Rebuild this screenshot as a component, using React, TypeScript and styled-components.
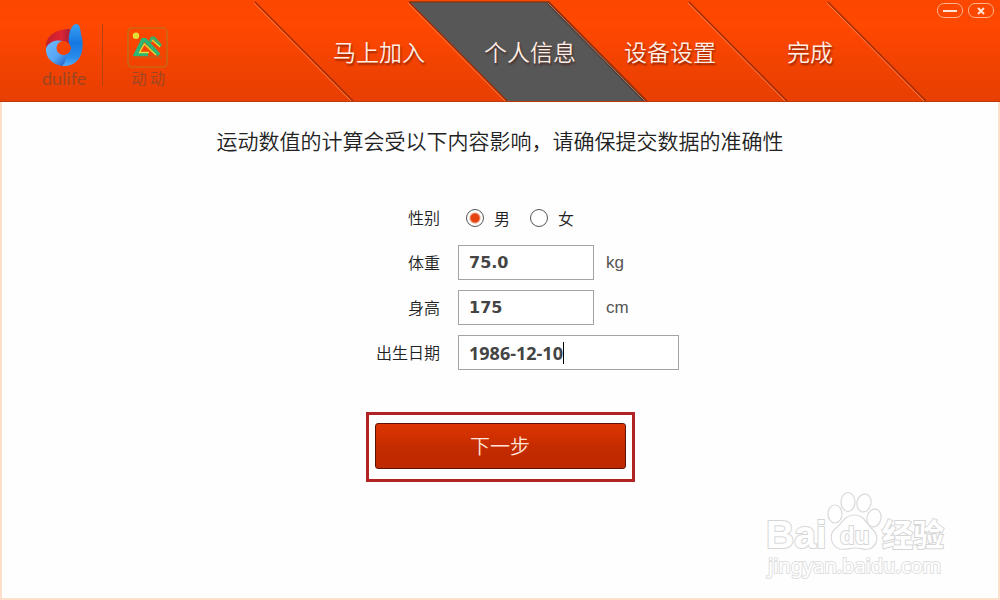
import React from "react";
import styled, { createGlobalStyle, css } from "styled-components";

const GlobalStyle = createGlobalStyle`
  *, *::before, *::after { box-sizing: border-box; }
  body {
    margin: 0;
    background: #fff;
    color: #222;
    font-family: "Noto Sans CJK SC", sans-serif;
    font-weight: 350;
  }
`;

const Window = styled.div`
  position: relative;
  display: flex;
  flex-direction: column;
  min-height: 100vh;
  background: #fefefe;
`;

const Header = styled.header`
  display: flex;
  height: 102px;
  overflow: hidden;
  background: linear-gradient(#fb4700, #ff4800 24%, #ee4102 75%, #e83f02);
  border-bottom: 1px solid #b93a0c;
`;

const Brands = styled.div`
  display: flex;
  flex: 0 0 306px;
  align-items: flex-start;
  padding: 24px 0 0 42px;
`;

const Brand = styled.div<{ $divided?: boolean }>`
  display: flex;
  flex-direction: column;
  align-items: center;
  height: 62px;
  ${(p) =>
    p.$divided &&
    css`
      padding-right: 16px;
      margin-right: 24px;
      border-right: 1px solid #b9400f;
    `}

  svg {
    flex-shrink: 0;
  }
`;

const BrandName = styled.span<{ $latin?: boolean }>`
  color: #9c4721;
  font-family: ${(p) => (p.$latin ? '"Lato", sans-serif' : '"Noto Sans CJK SC", sans-serif')};
  font-size: ${(p) => (p.$latin ? 18 : 15)}px;
  font-weight: 400;
  line-height: 20px;
  white-space: pre;
`;

const Steps = styled.ol`
  display: flex;
  flex: 0 1 auto;
  margin: 0;
  padding: 0;
  list-style: none;
`;

const StepItem = styled.li<{ $first?: boolean }>`
  position: relative;
  width: ${(p) => (p.$first ? 154 : 140)}px;
  padding-right: ${(p) => (p.$first ? 8 : 0)}px;
`;

const StepShape = styled.svg`
  position: absolute;
  top: 0;
  left: -53px;
  overflow: visible;
`;

const StepLabel = styled.a`
  position: relative;
  display: block;
  color: #ffeee4;
  font-size: 23px;
  line-height: 102px;
  text-align: center;
  text-decoration: none;
  text-shadow: 1px 2px 2px rgba(60, 10, 0, 0.55);
`;

const WindowControls = styled.div`
  display: flex;
  gap: 5px;
  margin-left: auto;
  padding: 3px 6px 0 0;
`;

const ControlButton = styled.button`
  display: flex;
  align-items: center;
  justify-content: center;
  width: 26px;
  height: 15px;
  padding: 0;
  background: transparent;
  border: 1px solid #ffb28c;
  border-radius: 7px;
`;

const Content = styled.main`
  display: flex;
  flex: 1;
  flex-direction: column;
  align-items: center;
  border: 2px solid #ffdfca;
  border-top: 0;
`;

const Title = styled.h1`
  margin: 23px 0 0;
  font-size: 21px;
  font-weight: 350;
  line-height: 30px;
`;

const Form = styled.form`
  display: flex;
  flex-direction: column;
  align-items: center;
  margin-top: 45px;
`;

const Fields = styled.div`
  display: flex;
  flex-direction: column;
  gap: 10px;
`;

const Row = styled.div`
  display: grid;
  grid-template-columns: 119px 221px;
  column-gap: 18px;
  align-items: center;
  height: 35px;
`;

const Label = styled.label`
  padding-bottom: 2px;
  font-size: 16px;
  line-height: 24px;
  text-align: right;
`;

const Control = styled.div`
  position: relative;
  display: flex;
  align-items: center;
`;

const RadioLabel = styled.label`
  display: flex;
  align-items: center;
  gap: 10px;
  margin-left: 8px;
  margin-right: 12px;
  font-size: 16px;
  line-height: 24px;
`;

const Radio = styled.input`
  appearance: none;
  width: 18px;
  height: 18px;
  margin: 0;
  border: 1px solid #555;
  border-radius: 50%;
  background: #fff;
  &:checked {
    background: radial-gradient(circle, #e5430f 4px, #fff 6px);
  }
`;

const TextInput = styled.input<{ $wide?: boolean }>`
  width: ${(p) => (p.$wide ? 221 : 136)}px;
  height: 35px;
  padding: 1px 10px;
  border: 1px solid #a3a3a3;
  background: #fff;
  color: #444;
  font-family: ${(p) => (p.$wide ? '"Open Sans"' : '"DejaVu Sans"')}, sans-serif;
  font-size: ${(p) => (p.$wide ? 18 : 16)}px;
  font-weight: 700;
  outline: none;
`;

const Unit = styled.span`
  margin-left: 12px;
  color: #555;
  font-family: "Liberation Sans", sans-serif;
  font-size: 17px;
  font-weight: 400;
  line-height: 24px;
`;

const Caret = styled.span`
  position: absolute;
  top: 7px;
  left: 105px;
  width: 1px;
  height: 22px;
  background: #000;
`;

const Highlight = styled.div`
  width: 269px;
  margin-top: 42px;
  padding: 8px 6px 10px;
  border: 3px solid #b22323;
`;

const SubmitButton = styled.button`
  display: block;
  width: 100%;
  height: 46px;
  padding: 0;
  border: 1px solid #5a1406;
  border-radius: 3px;
  background: linear-gradient(#dc3502, #c22a00 60%, #bf2900);
  color: #ffe3d6;
  font-family: inherit;
  font-size: 20px;
  font-weight: 350;
  line-height: 44px;
`;

const Watermark = styled.svg`
  position: absolute;
  right: 50px;
  bottom: 16px;
`;

const DulifeLogo = () => (
  <svg width="44" height="44" viewBox="0 0 44 44" aria-hidden="true">
    <defs>
      <linearGradient id="stem" x1="0" y1="0" x2="0" y2="1">
        <stop offset="0" stopColor="#3ba0f2" />
        <stop offset="0.45" stopColor="#1478e0" />
        <stop offset="0.8" stopColor="#2a8cec" />
        <stop offset="1" stopColor="#55aef8" />
      </linearGradient>
      <linearGradient id="bowl" x1="0" y1="0" x2="1" y2="1">
        <stop offset="0" stopColor="#6fb8fb" />
        <stop offset="0.55" stopColor="#56a5f5" />
        <stop offset="1" stopColor="#1450b8" />
      </linearGradient>
      <linearGradient id="cap" x1="0" y1="0" x2="1" y2="0">
        <stop offset="0" stopColor="#c2202c" />
        <stop offset="0.6" stopColor="#dd2433" />
        <stop offset="1" stopColor="#a51d3a" />
      </linearGradient>
      <mask id="hole">
        <rect width="44" height="44" fill="#fff" />
        <circle cx="21.500" cy="24" r="7" fill="#000" />
      </mask>
    </defs>
    <g mask="url(#hole)">
      <path d="M4 24C3 14 11 5 28 5L29 22L22 24Z" fill="url(#cap)" />
      <path d="M4 24C8 16 18 14 27 20L24 36L21 42C10 41 3 33 4 24Z" fill="url(#bowl)" />
      <path d="M27 20C26 12 28 1 34 0C39 0 38 7 40 14C43 30 36 43 20 42C24 39 23 33 25 30C29 28 30 23 27 20Z" fill="url(#stem)" />
    </g>
  </svg>
);

const DongdongLogo = () => (
  <svg width="42" height="44" viewBox="0 0 42 44" aria-hidden="true">
    <rect x="1" y="4" width="39" height="39" rx="4" fill="none" stroke="#b8741f" strokeWidth="1.200" />
    <circle cx="9" cy="11.700" r="3.200" fill="#e3df35" />
    <path d="M21 30H9L16 16H18L32 31" fill="none" stroke="#2bb673" strokeWidth="4" />
    <path d="M23 18L25 14H27L34 22" fill="none" stroke="#3fae66" strokeWidth="3" />
    <path d="M22 28.500H12.500L17.300 20L29 31M25 16L33 23" fill="none" stroke="#e0e03c" strokeWidth="1.300" />
    <path d="M7 33H35" stroke="#a0702c" strokeWidth="1" />
  </svg>
);

const steps = [
  { name: "马上加入", current: false },
  { name: "个人信息", current: true },
  { name: "设备设置", current: false },
  { name: "完成", current: false },
];

const Slant = ({ x }: { x: number }) => (
  <>
    <path d={`M${x} 2L${x + 98} 101`} stroke="#9f2c05" strokeWidth="1.300" />
    <path d={`M${x - 1} 3L${x + 97} 102`} stroke="#ff9a68" strokeWidth="0.700" />
  </>
);

export default function App() {
  return (
    <>
      <GlobalStyle />
      <Window>
        <Header>
          <Brands>
            <Brand $divided>
              <DulifeLogo />
              <BrandName $latin>dulife</BrandName>
            </Brand>
            <Brand>
              <DongdongLogo />
              <BrandName>动 动</BrandName>
            </Brand>
          </Brands>
          <nav aria-label="设置步骤">
            <Steps>
              {steps.map((step, i) => (
                <StepItem key={step.name} $first={i === 0}>
                  <StepShape width="240" height="102" aria-hidden="true">
                    {step.current && (
                      <>
                        <path d="M2 2H142L241 102H101Z" fill="#575757" />
                        <path d="M2 2H142" stroke="#7d3a1c" strokeWidth="1.500" />
                        <path d="M141 3L239 102" stroke="#3c2a24" strokeWidth="3" opacity="0.6" />
                      </>
                    )}
                    <Slant x={2} />
                    {i === steps.length - 1 && <Slant x={141} />}
                  </StepShape>
                  <StepLabel href="#" aria-current={step.current ? "step" : undefined}>
                    {step.name}
                  </StepLabel>
                </StepItem>
              ))}
            </Steps>
          </nav>
          <WindowControls>
            <ControlButton type="button" aria-label="最小化">
              <svg width="14" height="4">
                <path d="M0 2H14" stroke="#ffe3d3" strokeWidth="2" />
              </svg>
            </ControlButton>
            <ControlButton type="button" aria-label="关闭">
              <svg width="8" height="8">
                <path d="M1 1L7 7M7 1L1 7" stroke="#ffe3d3" strokeWidth="2" />
              </svg>
            </ControlButton>
          </WindowControls>
        </Header>

        <Content>
          <Title>运动数值的计算会受以下内容影响，请确保提交数据的准确性</Title>
          <Form onSubmit={(e) => e.preventDefault()}>
            <Fields>
              <Row role="radiogroup" aria-labelledby="gender">
                <Label as="span" id="gender">性别</Label>
                <Control>
                  <RadioLabel>
                    <Radio type="radio" name="gender" defaultChecked />男
                  </RadioLabel>
                  <RadioLabel>
                    <Radio type="radio" name="gender" />女
                  </RadioLabel>
                </Control>
              </Row>
              <Row>
                <Label htmlFor="weight">体重</Label>
                <Control>
                  <TextInput id="weight" defaultValue="75.0" />
                  <Unit>kg</Unit>
                </Control>
              </Row>
              <Row>
                <Label htmlFor="height">身高</Label>
                <Control>
                  <TextInput id="height" defaultValue="175" />
                  <Unit>cm</Unit>
                </Control>
              </Row>
              <Row>
                <Label htmlFor="birthday">出生日期</Label>
                <Control>
                  <TextInput id="birthday" $wide defaultValue="1986-12-10" />
                  <Caret />
                </Control>
              </Row>
            </Fields>
            <Highlight>
              <SubmitButton type="submit">下一步</SubmitButton>
            </Highlight>
          </Form>
        </Content>

        <Watermark width="190" height="96" viewBox="0 0 190 96">
          <g fill="#fff" stroke="#d9d9d9" strokeWidth="1.200">
            <ellipse cx="75" cy="26" rx="7" ry="9" />
            <ellipse cx="88" cy="14" rx="7" ry="9.500" />
            <ellipse cx="104" cy="15" rx="7" ry="9" transform="rotate(12 104 15)" />
            <ellipse cx="114" cy="30" rx="7" ry="9" transform="rotate(12 114 30)" />
            <path d="M94 27C84 27 82 36 75 41C69 46 70 58 80 61C86 62 90 60 95 60C101 60 104 62 109 61C118 58 119 48 113 42C106 36 105 27 94 27Z" />
          </g>
          <g fill="#fff" stroke="#d6d6d6" strokeWidth="2" paintOrder="stroke" fontWeight="700" fontFamily="Liberation Sans, sans-serif">
            <text x="6" y="60" fontSize="39">Bai</text>
            <text x="80" y="56" fontSize="24">du</text>
            <text x="122" y="58" fontSize="31" fontFamily="Noto Sans CJK SC, sans-serif">经验</text>
          </g>
          <text x="8" y="85" fontSize="20" fontFamily="Noto Sans, sans-serif" fontWeight="400" fill="#fff" stroke="#e0e0e0" strokeWidth="2" paintOrder="stroke">
            jingyan.baidu.com
          </text>
        </Watermark>
      </Window>
    </>
  );
}
